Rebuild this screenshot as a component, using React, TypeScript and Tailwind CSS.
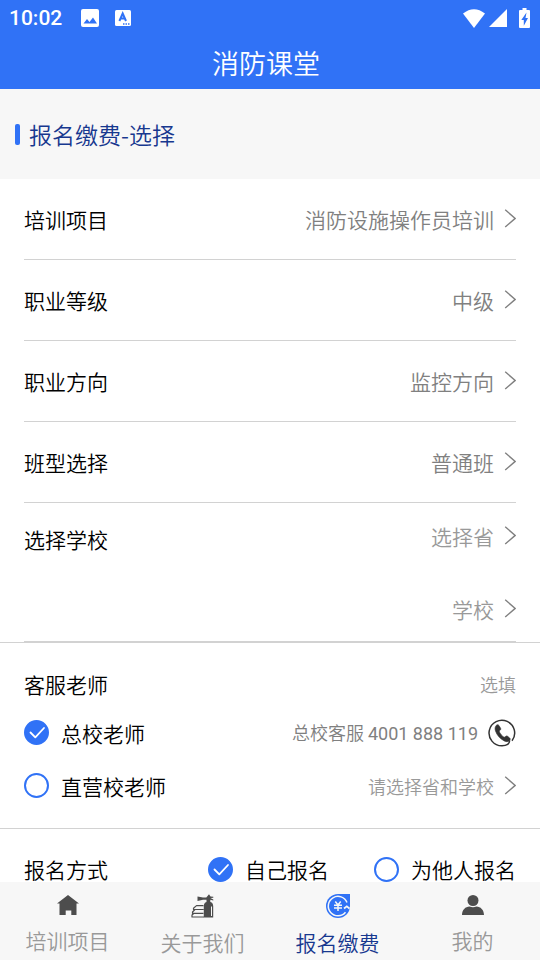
import React from 'react';

interface Option {
  label: string;
  options: string[];
}

const FIELDS: Option[] = [
  { label: '培训项目', options: ['消防设施操作员培训', '注册消防工程师培训'] },
  { label: '职业等级', options: ['中级', '初级', '高级'] },
  { label: '职业方向', options: ['监控方向', '维保方向'] },
  { label: '班型选择', options: ['普通班', '精品班'] },
];

const Chevron: React.FC = () => (
  <svg viewBox="0 0 12 20" className="pointer-events-none h-5 w-3 shrink-0" fill="none" stroke="#808080" strokeWidth="1.4">
    <path d="M1.200 .8 11.200 9.400 1.200 18" />
  </svg>
);

interface PickerProps {
  label: string;
  options: string[];
  className?: string;
}

const Picker: React.FC<PickerProps> = ({ label, options, className = 'text-[21px] text-[#808080]' }) => (
  <span className="flex items-center gap-[10px]">
    <select aria-label={label} className={`field-sizing-content appearance-none bg-transparent text-right outline-none ${className}`}>
      {options.map((option) => (
        <option key={option}>{option}</option>
      ))}
    </select>
    <Chevron />
  </span>
);

interface RadioProps {
  name: string;
  label: string;
  defaultChecked?: boolean;
}

const Radio: React.FC<RadioProps> = ({ name, label, defaultChecked }) => (
  <label className="flex items-center gap-3">
    <span className="relative size-[25px]">
      <input
        type="radio"
        name={name}
        defaultChecked={defaultChecked}
        className="peer block size-full appearance-none rounded-full border-2 border-[#3072f6] bg-white checked:bg-[#3072f6]"
      />
      <svg
        viewBox="0 0 25 25"
        className="pointer-events-none absolute inset-0 hidden peer-checked:block"
        fill="none"
        stroke="white"
        strokeWidth="1.8"
        strokeLinecap="round"
        strokeLinejoin="round"
      >
        <path d="M6.500 12.500 11.300 17.300 20 8" />
      </svg>
    </span>
    {label}
  </label>
);

const StatusBar: React.FC = () => (
  <div className="flex h-9 items-center justify-between pl-[9px] pr-[10px]">
    <div className="flex items-center">
      <span className="font-['Roboto',sans-serif] text-[21px] font-medium">10:02</span>
      <svg viewBox="0 0 18 18" className="ml-[19px] size-[18px]">
        <rect width="18" height="18" rx="2" fill="white" />
        <path d="M2.500 14.500 6 10l2.500 3L12 8.500l4 6z" fill="#3072f6" />
      </svg>
      <svg viewBox="0 0 16 16" className="ml-4 size-4">
        <rect width="16" height="16" rx="1.500" fill="white" />
        <path d="M4.400 11 7.700 3.500l3.300 7.500M5.500 8.500h4.400" fill="none" stroke="#3072f6" strokeWidth="2" />
        <path d="M8 13.300h1.500v1.500H8zM10.500 13.300H12v1.500h-1.500zM13 13.300h1.500v1.500H13z" fill="#3072f6" />
      </svg>
    </div>
    <div className="flex items-center">
      <svg viewBox="0 0 22 19" className="h-[19px] w-[22px]" fill="white">
        <path d="M0 4.500Q11-4 22 4.500L11 19z" />
      </svg>
      <svg viewBox="0 0 18 18" className="ml-1 size-[18px]" fill="white">
        <path d="M18 0v18H0z" />
      </svg>
      <svg viewBox="0 0 11 20" className="ml-3 h-5 w-[11px]">
        <path d="M3.500 0h4v2H10a1 1 0 0 1 1 1v16a1 1 0 0 1-1 1H1a1 1 0 0 1-1-1V3a1 1 0 0 1 1-1h2.500z" fill="white" />
        <path d="M7.500 4.500 2.300 12h2.500v5.800L9 10H6.500z" fill="#3072f6" />
      </svg>
    </div>
  </div>
);

const PhoneIcon: React.FC = () => (
  <svg viewBox="0 0 28 28" className="size-7" fill="none">
    <path d="M24 21.800A12.800 12.800 0 1 0 14 26.800c4.500 0 8-1.800 7.500-5.500" stroke="#333" strokeWidth="1.500" />
    <path
      d="M8.200 6.400c1-1 2-1 2.700 0l1.600 2.700c.5.900.3 1.600-.5 2.200-.9.600-.8 1.200-.3 2.200.9 1.700 2.100 3.200 3.700 4.300.8.500 1.400.500 2-.200.700-.800 1.400-.900 2.200-.300l2 1.600c.900.800.8 1.600 0 2.500-1.400 1.500-3.300 1.600-5.400.5-4.200-2.200-7.300-5.700-8.700-9.900-.7-2.200-.6-4.200.7-5.600z"
      fill="#333"
      stroke="#333"
      strokeWidth=".6"
    />
  </svg>
);

const HomeIcon: React.FC = () => (
  <svg viewBox="0 0 22 22" className="size-[22px]" fill="#4d4d4d">
    <path d="M11 1 22 9.500h-2.500V21h-5.200v-4.500H8.700V21H2.500V9.500H0z" />
  </svg>
);

const ExtinguisherIcon: React.FC = () => (
  <svg viewBox="0 0 24 24" className="size-6" fill="#4d4d4d">
    <path d="M6.500 2.500 12 3.500h4v2.200h-4L6.500 7z" />
    <path d="M15.500 3.200 18 .2l1.500 2.300 2.800.3v.9l-2.800.3 2.800 1.500v.9l-3-.6V8h-3.800z" />
    <path d="M12.800 23.500V12q0-4.300 4.700-4.300T22.200 12v11.500z" />
    <path d="M20.500 12.500v9.500" stroke="#f7f7f7" strokeWidth="1" />
    <g fill="none" stroke="#4d4d4d" strokeWidth="1.200" strokeLinejoin="round">
      <path d="M12.500 11.600H5.500L2.500 14.300v1.200h10" />
      <path d="M12.500 15.500H4L1.500 18v1.300h11" />
      <path d="M3 19.300 1 21v2h12" />
    </g>
  </svg>
);

const PayIcon: React.FC = () => (
  <svg viewBox="0 0 24 24" className="size-6" fill="none">
    <path d="M12 0h12v12A12 12 0 1 1 12 0z" fill="#3072f6" />
    <path d="M21 8.500A9.700 9.700 0 1 0 19.500 18.200" stroke="#f7f7f7" strokeWidth="1.500" />
    <path d="M18 14.500 20.800 12.300 23.500 14.500" stroke="#f7f7f7" strokeWidth="1.800" />
    <path d="M9.300 7.500 12 11l2.700-3.500M8 11.300h8M8 14h8M12 11v6" stroke="#f7f7f7" strokeWidth="1.500" />
  </svg>
);

const UserIcon: React.FC = () => (
  <svg viewBox="0 0 22 22" className="size-[22px]" fill="#4d4d4d">
    <circle cx="11" cy="6.500" r="5.500" />
    <path d="M0 21c0-5 3.500-8.500 7.500-8.500Q11 14 14.500 12.500C18.500 12.500 22 16 22 21z" />
  </svg>
);

const TABS = [
  { label: '培训项目', icon: <HomeIcon /> },
  { label: '关于我们', icon: <ExtinguisherIcon /> },
  { label: '报名缴费', icon: <PayIcon />, active: true },
  { label: '我的', icon: <UserIcon /> },
];

const App: React.FC = () => {
  return (
    <div className="flex h-screen flex-col bg-white font-['Noto_Sans_CJK_SC',sans-serif] text-[21px] leading-6 font-[350] text-black">
      <header className="shrink-0 bg-[#3072f6] text-white">
        <StatusBar />
        <h1 className="h-[53px] pr-2 text-center text-[27px] leading-[53px]">消防课堂</h1>
      </header>

      <main className="min-h-0 flex-1 overflow-hidden">
        <div className="flex h-[90px] items-center gap-[9px] bg-[#f7f7f7] px-[15px]">
          <span className="h-[21px] w-[5px] rounded-xs bg-[#3072f6]" />
          <h2 className="text-[23px] text-[#17388f]">报名缴费-选择</h2>
        </div>

        <section className="border-b border-[#d2d2d2]">
          <div className="mx-6">
            {FIELDS.map((field) => (
              <div key={field.label} className="flex h-[81px] items-center justify-between border-b border-[#d2d2d2]">
                <span>{field.label}</span>
                <Picker label={field.label} options={field.options} />
              </div>
            ))}
            <div className="flex justify-between border-b border-[#d2d2d2]">
              <span className="pt-6">选择学校</span>
              <div className="flex flex-col items-end gap-2">
                <div className="flex h-[66px] items-center">
                  <Picker label="选择省" options={['选择省']} className="text-[21px] text-[#999999]" />
                </div>
                <div className="flex h-16 items-center">
                  <Picker label="学校" options={['学校']} className="text-[21px] text-[#999999]" />
                </div>
              </div>
            </div>
          </div>
        </section>

        <section className="border-b border-[#d2d2d2] px-6 pt-[19px] pb-4">
          <div className="flex h-11 items-center justify-between">
            <h3>客服老师</h3>
            <span className="text-lg text-[#999999]">选填</span>
          </div>
          <div className="flex h-[53px] items-center justify-between">
            <Radio name="teacher" label="总校老师" defaultChecked />
            <a href="tel:4001888119" className="flex items-center gap-[10px] text-lg text-[#808080]">
              <span>
                总校客服 <span className="font-['Roboto',sans-serif] font-normal">4001 888 119</span>
              </span>
              <PhoneIcon />
            </a>
          </div>
          <div className="flex h-[53px] items-center justify-between">
            <Radio name="teacher" label="直营校老师" />
            <Picker label="请选择省和学校" options={['请选择省和学校']} className="text-lg text-[#999999]" />
          </div>
        </section>

        <section className="flex h-20 items-center justify-between px-6">
          <h3>报名方式</h3>
          <div className="flex gap-[45px]">
            <Radio name="mode" label="自己报名" defaultChecked />
            <Radio name="mode" label="为他人报名" />
          </div>
        </section>
      </main>

      <nav className="grid h-[78px] shrink-0 grid-cols-4 bg-[#f7f7f7]">
        {TABS.map((tab) => (
          <a
            key={tab.label}
            href="#"
            className={`flex flex-col items-center gap-3 pt-3 ${tab.active ? 'text-[#17388f]' : 'text-[#999999]'}`}
          >
            {tab.icon}
            {tab.label}
          </a>
        ))}
      </nav>
    </div>
  );
};

export default App;
